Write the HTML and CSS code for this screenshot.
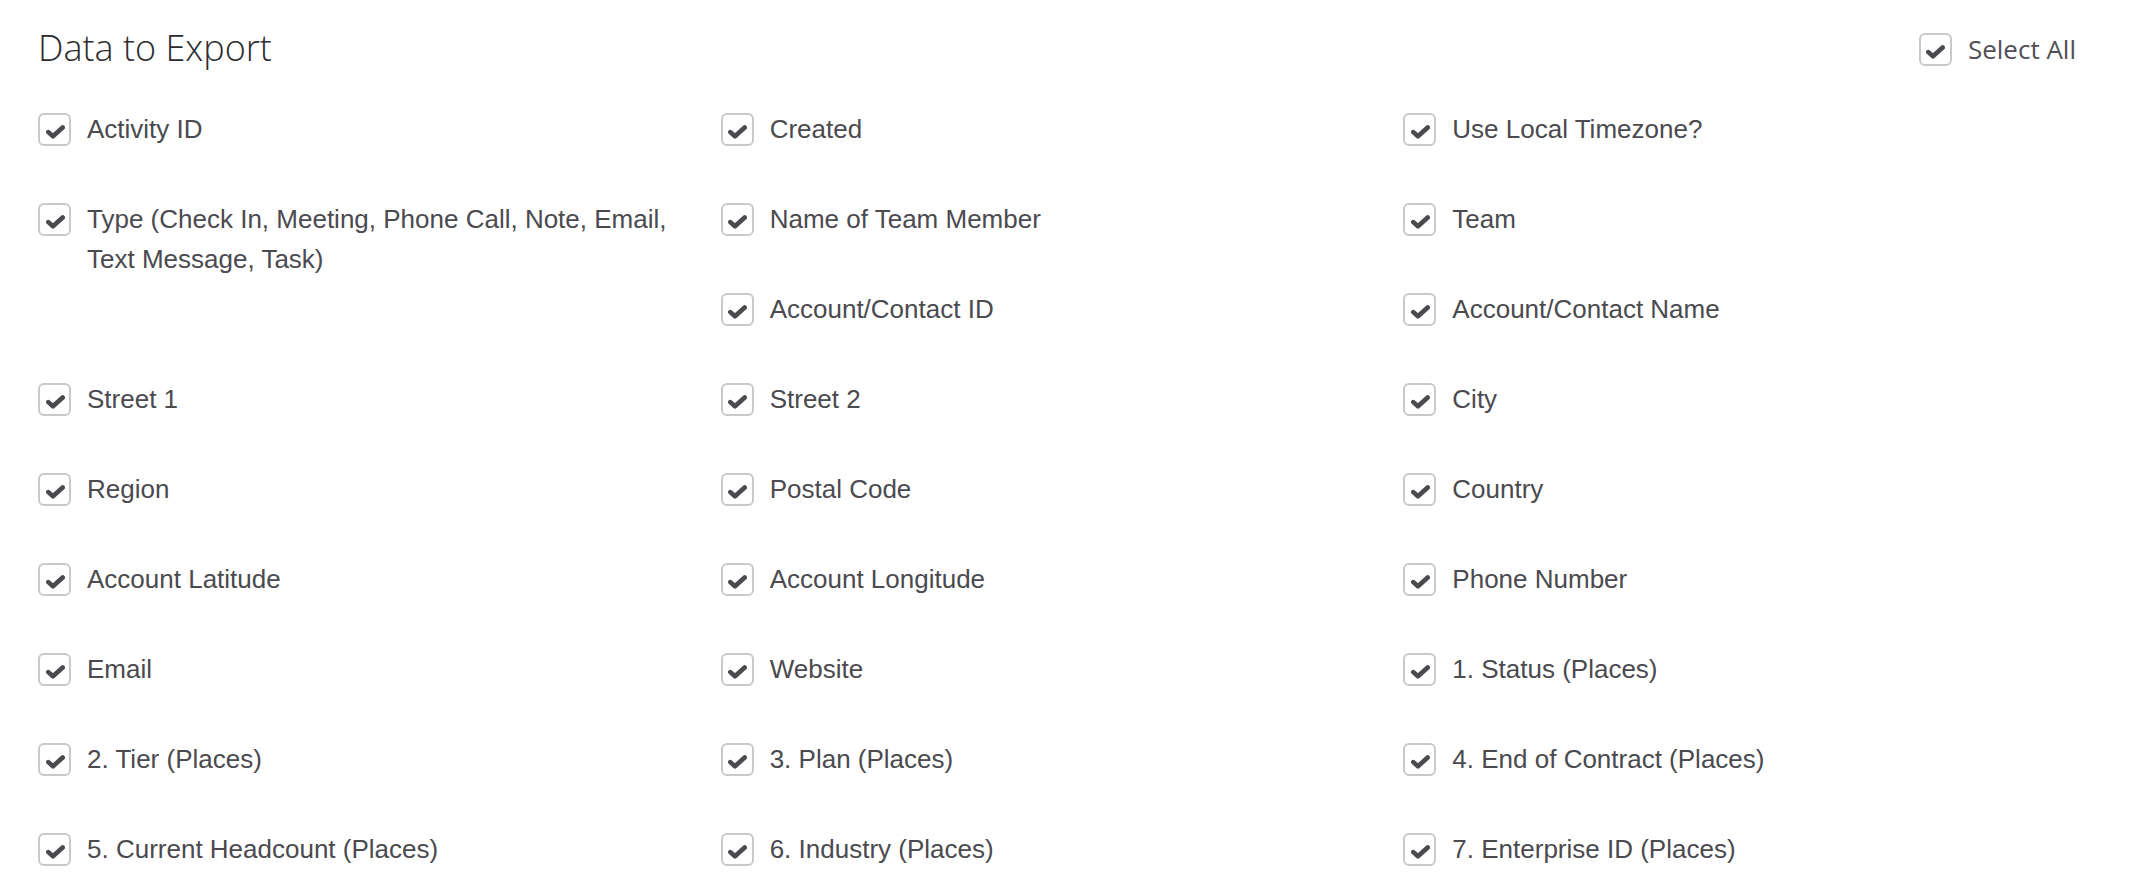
FILE: index.html
```html
<!DOCTYPE html>
<html lang="en">
<head>
  <meta charset="UTF-8" />
  <title>Data to Export</title>
  <link rel="stylesheet" href="styles.css">
</head>
<body>
  <div class="export">
    <div class="export-head">
      <h2>Data to Export</h2>
      <label class="select-all">
        <span class="box"><svg viewBox="0 0 18 13"><path d="M2.2 6.6 L6.6 10.6 L15.8 2.2" /></svg></span>
        Select All
      </label>
    </div>

    <div class="fields">
      <label class="field"><span class="box"><svg viewBox="0 0 18 13"><path d="M2.2 6.6 L6.6 10.6 L15.8 2.2" /></svg></span><span class="name">Activity ID</span></label>
      <label class="field"><span class="box"><svg viewBox="0 0 18 13"><path d="M2.2 6.6 L6.6 10.6 L15.8 2.2" /></svg></span><span class="name">Created</span></label>
      <label class="field"><span class="box"><svg viewBox="0 0 18 13"><path d="M2.2 6.6 L6.6 10.6 L15.8 2.2" /></svg></span><span class="name">Use Local Timezone?</span></label>

      <label class="field tall"><span class="box"><svg viewBox="0 0 18 13"><path d="M2.2 6.6 L6.6 10.6 L15.8 2.2" /></svg></span><span class="name">Type (Check In, Meeting, Phone Call, Note, Email, Text Message, Task)</span></label>
      <label class="field"><span class="box"><svg viewBox="0 0 18 13"><path d="M2.2 6.6 L6.6 10.6 L15.8 2.2" /></svg></span><span class="name">Name of Team Member</span></label>
      <label class="field"><span class="box"><svg viewBox="0 0 18 13"><path d="M2.2 6.6 L6.6 10.6 L15.8 2.2" /></svg></span><span class="name">Team</span></label>

      <label class="field"><span class="box"><svg viewBox="0 0 18 13"><path d="M2.2 6.6 L6.6 10.6 L15.8 2.2" /></svg></span><span class="name">Account/Contact ID</span></label>
      <label class="field"><span class="box"><svg viewBox="0 0 18 13"><path d="M2.2 6.6 L6.6 10.6 L15.8 2.2" /></svg></span><span class="name">Account/Contact Name</span></label>

      <label class="field"><span class="box"><svg viewBox="0 0 18 13"><path d="M2.2 6.6 L6.6 10.6 L15.8 2.2" /></svg></span><span class="name">Street 1</span></label>
      <label class="field"><span class="box"><svg viewBox="0 0 18 13"><path d="M2.2 6.6 L6.6 10.6 L15.8 2.2" /></svg></span><span class="name">Street 2</span></label>
      <label class="field"><span class="box"><svg viewBox="0 0 18 13"><path d="M2.2 6.6 L6.6 10.6 L15.8 2.2" /></svg></span><span class="name">City</span></label>

      <label class="field"><span class="box"><svg viewBox="0 0 18 13"><path d="M2.2 6.6 L6.6 10.6 L15.8 2.2" /></svg></span><span class="name">Region</span></label>
      <label class="field"><span class="box"><svg viewBox="0 0 18 13"><path d="M2.2 6.6 L6.6 10.6 L15.8 2.2" /></svg></span><span class="name">Postal Code</span></label>
      <label class="field"><span class="box"><svg viewBox="0 0 18 13"><path d="M2.2 6.6 L6.6 10.6 L15.8 2.2" /></svg></span><span class="name">Country</span></label>

      <label class="field"><span class="box"><svg viewBox="0 0 18 13"><path d="M2.2 6.6 L6.6 10.6 L15.8 2.2" /></svg></span><span class="name">Account Latitude</span></label>
      <label class="field"><span class="box"><svg viewBox="0 0 18 13"><path d="M2.2 6.6 L6.6 10.6 L15.8 2.2" /></svg></span><span class="name">Account Longitude</span></label>
      <label class="field"><span class="box"><svg viewBox="0 0 18 13"><path d="M2.2 6.6 L6.6 10.6 L15.8 2.2" /></svg></span><span class="name">Phone Number</span></label>

      <label class="field"><span class="box"><svg viewBox="0 0 18 13"><path d="M2.2 6.6 L6.6 10.6 L15.8 2.2" /></svg></span><span class="name">Email</span></label>
      <label class="field"><span class="box"><svg viewBox="0 0 18 13"><path d="M2.2 6.6 L6.6 10.6 L15.8 2.2" /></svg></span><span class="name">Website</span></label>
      <label class="field"><span class="box"><svg viewBox="0 0 18 13"><path d="M2.2 6.6 L6.6 10.6 L15.8 2.2" /></svg></span><span class="name">1. Status (Places)</span></label>

      <label class="field"><span class="box"><svg viewBox="0 0 18 13"><path d="M2.2 6.6 L6.6 10.6 L15.8 2.2" /></svg></span><span class="name">2. Tier (Places)</span></label>
      <label class="field"><span class="box"><svg viewBox="0 0 18 13"><path d="M2.2 6.6 L6.6 10.6 L15.8 2.2" /></svg></span><span class="name">3. Plan (Places)</span></label>
      <label class="field"><span class="box"><svg viewBox="0 0 18 13"><path d="M2.2 6.6 L6.6 10.6 L15.8 2.2" /></svg></span><span class="name">4. End of Contract (Places)</span></label>

      <label class="field"><span class="box"><svg viewBox="0 0 18 13"><path d="M2.2 6.6 L6.6 10.6 L15.8 2.2" /></svg></span><span class="name">5. Current Headcount (Places)</span></label>
      <label class="field"><span class="box"><svg viewBox="0 0 18 13"><path d="M2.2 6.6 L6.6 10.6 L15.8 2.2" /></svg></span><span class="name">6. Industry (Places)</span></label>
      <label class="field"><span class="box"><svg viewBox="0 0 18 13"><path d="M2.2 6.6 L6.6 10.6 L15.8 2.2" /></svg></span><span class="name">7. Enterprise ID (Places)</span></label>
    </div>
  </div>
</body>
</html>
```

FILE: styles.css
```css
body {
  margin: 0;
  background: #fff;
  font-family: 'Liberation Sans', Arial, sans-serif;
  color: #4a4a4f;
}
.export {
  padding: 22px 54px 0 38px;
}
.export-head {
  display: flex;
  justify-content: space-between;
  align-items: flex-start;
}
.export-head h2 {
  margin: 3px 0 0;
  font-family: 'Open Sans', sans-serif;
  font-weight: 300;
  font-size: 36px;
  line-height: 46px;
  color: #2b2b2e;
}
.select-all {
  display: flex;
  align-items: center;
  gap: 16px;
  margin-top: 11px;
  margin-right: 10px;
  font-family: 'Open Sans', sans-serif;
  font-size: 26px;
  line-height: 33px;
  color: #505055;
}
.box {
  flex: none;
  width: 33px;
  height: 33px;
  box-sizing: border-box;
  border: 2px solid #c9c9cc;
  border-radius: 6px;
  background: #fff;
  display: flex;
  align-items: flex-end;
  justify-content: center;
  padding-bottom: 5px;
  padding-left: 1px;
}
.box svg {
  width: 19px;
  height: 14px;
}
.box path {
  fill: none;
  stroke: #4a4a4f;
  stroke-width: 4.4;
  stroke-linecap: round;
  stroke-linejoin: round;
}

.fields {
  margin-top: 38px;
  display: grid;
  grid-template-columns: repeat(3, 1fr);
  grid-auto-rows: 40px;
  row-gap: 50px;
}
.field {
  display: flex;
  align-items: flex-start;
  gap: 16px;
  padding-right: 30px;
  font-size: 26px;
  line-height: 40px;
}
.field .box {
  margin-top: 4px;
}
.field.tall {
  grid-row: span 2;
}
```
